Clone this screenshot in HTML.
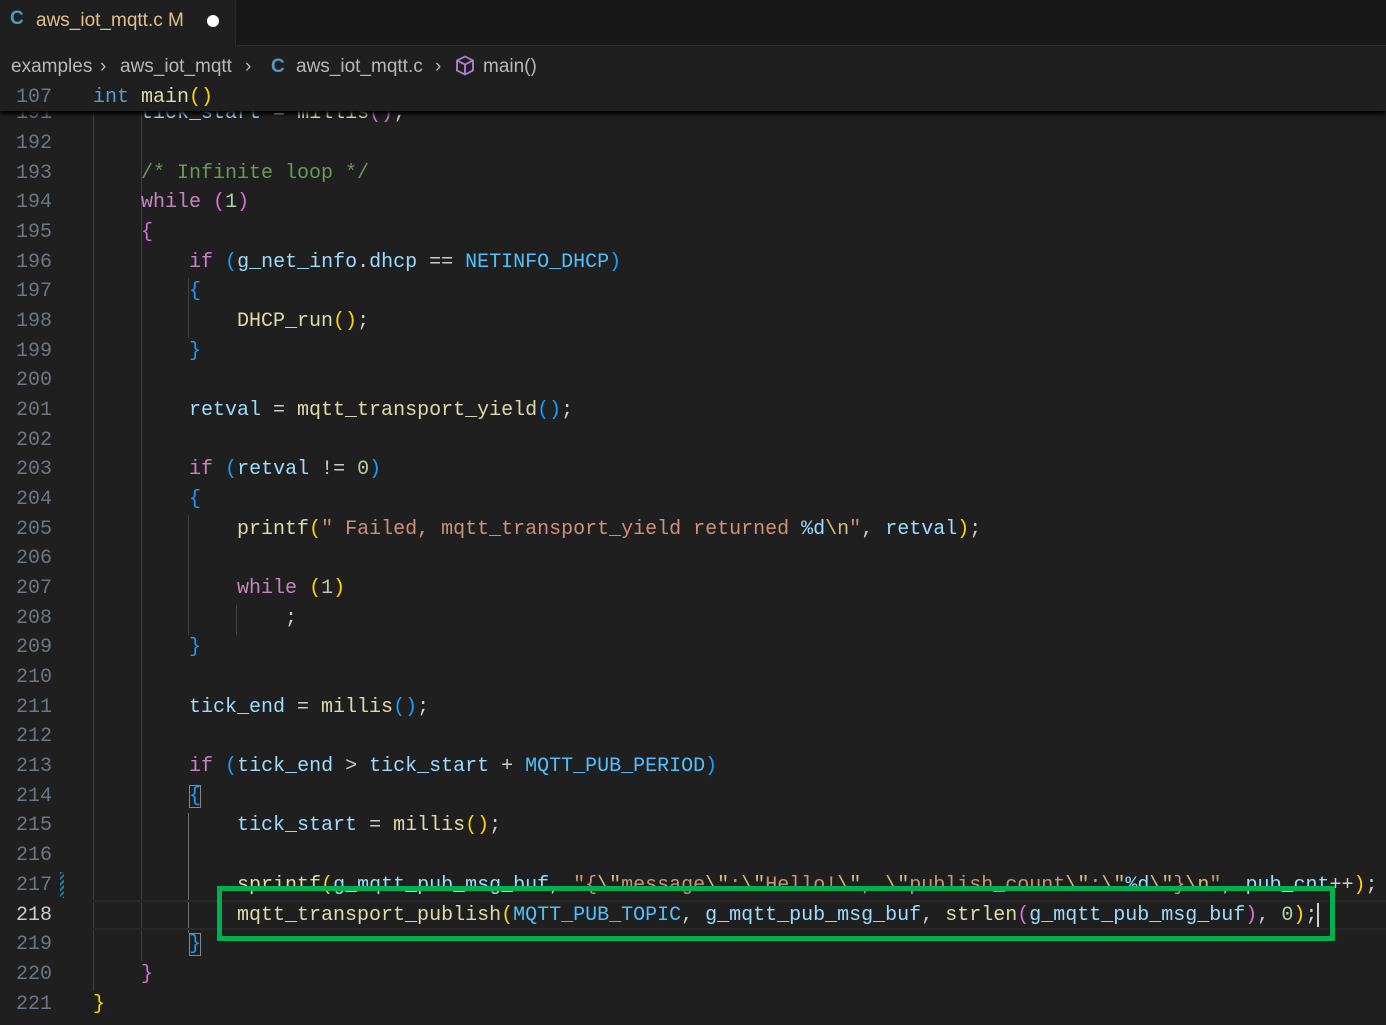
<!DOCTYPE html>
<html><head><meta charset="utf-8"><style>
body{margin:0;width:1386px;height:1025px;background:#1f1f1f;overflow:hidden;position:relative;font-family:"Liberation Mono",monospace;}
.tabs{position:absolute;left:0;top:0;width:1386px;height:45px;background:#181818;border-bottom:1px solid #2b2b2b;}
.tab{position:absolute;left:0;top:0;width:235px;height:46px;background:#1f1f1f;border-right:1px solid #2b2b2b;font-family:"Liberation Sans",sans-serif;font-size:19px;}
.bc{position:absolute;left:0;top:49px;height:36px;width:1386px;font-family:"Liberation Sans",sans-serif;font-size:19px;color:#b8b8b8;line-height:36px;white-space:nowrap;}
.row{position:absolute;left:0;height:30px;line-height:30px;font-size:20px;white-space:pre;width:1386px;margin-top:3px;}
.ln{position:absolute;left:0;width:52px;text-align:right;color:#6e7681;}
.cd{position:absolute;left:93px;color:#cccccc;}
.k{color:#569cd6}.c{color:#c586c0}.v{color:#9cdcfe}.f{color:#dcdcaa}.s{color:#ce9178}.e{color:#d7ba7d}.m{color:#4fc1ff}.n{color:#b5cea8}.cm{color:#6a9955}
.b1{color:#ffd700}.b2{color:#da70d6}.b3{color:#179fff}
.g{position:absolute;width:1px;background:#404040;}
</style></head><body>
<div class="tabs"></div>
<div class="tab"><span style="position:absolute;left:10px;top:8px;color:#519aba;font-weight:bold">C</span><span style="position:absolute;left:36px;top:10px;color:#e2c08d">aws_iot_mqtt.c M</span><span style="position:absolute;left:207px;top:15px;width:12px;height:12px;border-radius:50%;background:#fff"></span></div>
<div class="bc"><span style="position:absolute;left:11px">examples</span><span style="position:absolute;left:100px">›</span><span style="position:absolute;left:120px">aws_iot_mqtt</span><span style="position:absolute;left:245px">›</span><span style="position:absolute;left:271px;color:#519aba;font-weight:bold">C</span><span style="position:absolute;left:296px">aws_iot_mqtt.c</span><span style="position:absolute;left:435px">›</span>
<svg style="position:absolute;left:455px;top:6px" width="20" height="22" viewBox="0 0 20 22"><path d="M10 1.5L18 5.5V15.5L10 19.5L2 15.5V5.5Z M2 5.5L10 9.5L18 5.5 M10 9.5V19.5" fill="none" stroke="#b180d7" stroke-width="1.8"/></svg><span style="position:absolute;left:483px">main()</span></div>

<div class="g" style="left:93px;top:111px;height:880px"></div>
<div class="g" style="left:141px;top:111px;height:850px"></div>
<div class="g" style="left:188px;top:278px;height:60px"></div>
<div class="g" style="left:188px;top:515px;height:120px"></div>
<div class="g" style="left:236px;top:605px;height:30px"></div>
<div class="g" style="left:188px;top:813px;height:120px;background:#707070"></div>
<div style="position:absolute;left:60px;top:872px;width:4px;height:26px;background:repeating-linear-gradient(135deg,#1b81a8 0 2px,transparent 2px 4px)"></div>
<div style="position:absolute;left:93px;top:900px;width:1293px;height:30px;border-top:2px solid #282828;border-bottom:2px solid #282828;box-sizing:border-box"></div>

<div class="row" style="top:96px"><span class="ln">191</span><span class="cd">    <span class="v">tick_start</span> = <span class="f">millis</span><span class="b2">()</span>;</span></div>
<div class="row" style="top:126px"><span class="ln">192</span></div>
<div class="row" style="top:156px"><span class="ln">193</span><span class="cd">    <span class="cm">/* Infinite loop */</span></span></div>
<div class="row" style="top:185px"><span class="ln">194</span><span class="cd">    <span class="c">while</span> <span class="b2">(</span><span class="n">1</span><span class="b2">)</span></span></div>
<div class="row" style="top:215px"><span class="ln">195</span><span class="cd">    <span class="b2">{</span></span></div>
<div class="row" style="top:245px"><span class="ln">196</span><span class="cd">        <span class="c">if</span> <span class="b3">(</span><span class="v">g_net_info</span>.<span class="v">dhcp</span> == <span class="m">NETINFO_DHCP</span><span class="b3">)</span></span></div>
<div class="row" style="top:274px"><span class="ln">197</span><span class="cd">        <span class="b3">{</span></span></div>
<div class="row" style="top:304px"><span class="ln">198</span><span class="cd">            <span class="f">DHCP_run</span><span class="b1">()</span>;</span></div>
<div class="row" style="top:334px"><span class="ln">199</span><span class="cd">        <span class="b3">}</span></span></div>
<div class="row" style="top:363px"><span class="ln">200</span></div>
<div class="row" style="top:393px"><span class="ln">201</span><span class="cd">        <span class="v">retval</span> = <span class="f">mqtt_transport_yield</span><span class="b3">()</span>;</span></div>
<div class="row" style="top:423px"><span class="ln">202</span></div>
<div class="row" style="top:452px"><span class="ln">203</span><span class="cd">        <span class="c">if</span> <span class="b3">(</span><span class="v">retval</span> != <span class="n">0</span><span class="b3">)</span></span></div>
<div class="row" style="top:482px"><span class="ln">204</span><span class="cd">        <span class="b3">{</span></span></div>
<div class="row" style="top:512px"><span class="ln">205</span><span class="cd">            <span class="f">printf</span><span class="b1">(</span><span class="s">" Failed, mqtt_transport_yield returned </span><span class="v">%d</span><span class="e">\n</span><span class="s">"</span>, <span class="v">retval</span><span class="b1">)</span>;</span></div>
<div class="row" style="top:541px"><span class="ln">206</span></div>
<div class="row" style="top:571px"><span class="ln">207</span><span class="cd">            <span class="c">while</span> <span class="b1">(</span><span class="n">1</span><span class="b1">)</span></span></div>
<div class="row" style="top:601px"><span class="ln">208</span><span class="cd">                ;</span></div>
<div class="row" style="top:630px"><span class="ln">209</span><span class="cd">        <span class="b3">}</span></span></div>
<div class="row" style="top:660px"><span class="ln">210</span></div>
<div class="row" style="top:690px"><span class="ln">211</span><span class="cd">        <span class="v">tick_end</span> = <span class="f">millis</span><span class="b3">()</span>;</span></div>
<div class="row" style="top:719px"><span class="ln">212</span></div>
<div class="row" style="top:749px"><span class="ln">213</span><span class="cd">        <span class="c">if</span> <span class="b3">(</span><span class="v">tick_end</span> &gt; <span class="v">tick_start</span> + <span class="m">MQTT_PUB_PERIOD</span><span class="b3">)</span></span></div>
<div class="row" style="top:779px"><span class="ln">214</span><span class="cd">        <span class="b3" style="outline:1px solid #888;outline-offset:-1px">{</span></span></div>
<div class="row" style="top:808px"><span class="ln">215</span><span class="cd">            <span class="v">tick_start</span> = <span class="f">millis</span><span class="b1">()</span>;</span></div>
<div class="row" style="top:838px"><span class="ln">216</span></div>
<div class="row" style="top:868px"><span class="ln">217</span><span class="cd">            <span class="f">sprintf</span><span class="b1">(</span><span class="v">g_mqtt_pub_msg_buf</span>, <span class="s">"{</span><span class="e">\"</span><span class="s">message</span><span class="e">\"</span><span class="s">:</span><span class="e">\"</span><span class="s">Hello!</span><span class="e">\"</span><span class="s">, </span><span class="e">\"</span><span class="s">publish_count</span><span class="e">\"</span><span class="s">:</span><span class="e">\"</span><span class="v">%d</span><span class="e">\"</span><span class="s">}</span><span class="e">\n</span><span class="s">"</span>, <span class="v">pub_cnt</span>++<span class="b1">)</span>;</span></div>
<div class="row" style="top:898px"><span class="ln" style="color:#cccccc">218</span><span class="cd">            <span class="f">mqtt_transport_publish</span><span class="b1">(</span><span class="m">MQTT_PUB_TOPIC</span>, <span class="v">g_mqtt_pub_msg_buf</span>, <span class="f">strlen</span><span class="b2">(</span><span class="v">g_mqtt_pub_msg_buf</span><span class="b2">)</span>, <span class="n">0</span><span class="b1">)</span>;</span></div>
<div class="row" style="top:927px"><span class="ln">219</span><span class="cd">        <span class="b3" style="outline:1px solid #888;outline-offset:-1px">}</span></span></div>
<div class="row" style="top:957px"><span class="ln">220</span><span class="cd">    <span class="b2">}</span></span></div>
<div class="row" style="top:987px"><span class="ln">221</span><span class="cd"><span class="b1">}</span></span></div>
<div style="position:absolute;left:1317px;top:903px;width:2px;height:24px;background:#d0d0d0"></div>

<div style="position:absolute;left:0;top:81px;width:1386px;height:30px;background:#1f1f1f;box-shadow:0 3px 4px #000"></div>
<div class="row" style="top:81px;margin-top:2px"><span class="ln">107</span><span class="cd"><span class="k">int</span> <span class="f">main</span><span class="b1">()</span></span></div>

<div style="position:absolute;left:217px;top:886px;width:1118px;height:55px;border:5px solid #00b050;box-sizing:border-box"></div>
</body></html>
